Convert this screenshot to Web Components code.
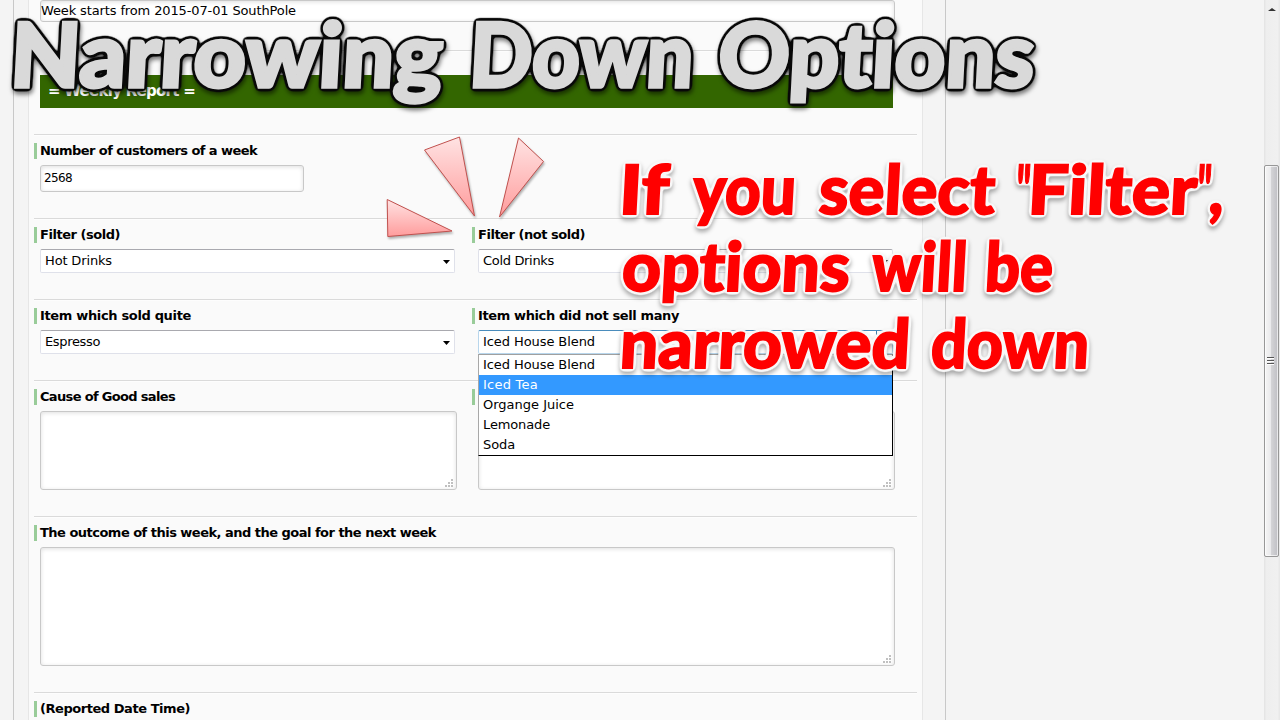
<!DOCTYPE html>
<html lang="en"><head><meta charset="utf-8"><title>Weekly Report</title>
<style>
html,body{margin:0;height:100%;overflow:hidden}
body{background:#f4f4f4;font:13px/16px "DejaVu Sans",Verdana,sans-serif;color:#000}
</style></head><body>
<report-page></report-page>
<script>
const define=(name,html,init)=>customElements.define(name,class extends HTMLElement{
  connectedCallback(){
    if(this.shadowRoot)return;
    this.attachShadow({mode:'open'}).innerHTML=html;
    if(init)init.call(this,this.shadowRoot);
  }
});

// Text whose tracking is adjusted so that it takes the width in "w".
define('fit-text',`<style>:host{display:inline-block;white-space:nowrap}span{display:inline-block}</style><span></span>`,function(r){
  const s=r.querySelector('span');
  s.textContent=this.getAttribute('text');
  const w=+this.getAttribute('w'),now=s.getBoundingClientRect().width;
  if(w&&now)s.style.letterSpacing=((w-now)/s.textContent.length)+'px';
});

define('form-row',`<style>
:host{display:grid;grid-template-columns:438px 1fr;box-sizing:border-box;border-top:1px solid #dadada;padding-top:8px;flex:none;box-shadow:inset 0 1px #fdfdfd}
:host([wide]){grid-template-columns:1fr}
</style><slot></slot>`);

define('form-field',`<style>
:host{display:flex;flex-direction:column;gap:6px}
.label{height:16px;border-left:3px solid #99cc99;padding-left:3px;font-weight:bold;line-height:15px}
.control{padding-left:6px;display:flex}
</style><div class="label"></div><div class="control"><slot></slot></div>`,function(r){
  if(this.hasAttribute('label'))r.querySelector('.label').innerHTML=`<fit-text w="${this.getAttribute('w')}" text="${this.getAttribute('label')}"></fit-text>`;
});

define('text-box',`<style>
:host{display:flex;box-sizing:border-box;width:var(--w);height:var(--h);border:1px solid #c8c8c8;border-radius:3px;background:#fff;box-shadow:inset 0 1px 4px rgba(0,0,0,.13);padding:4px 3px;align-items:flex-start}
slot{display:block;flex:1}
svg{display:none;align-self:flex-end;margin:0 0 -2px}
:host([resizable]) svg{display:block}
</style><slot></slot><svg width="8" height="8" fill="#c0c0c0"><path d="M6 0h2v2h-2zM3 3h2v2h-2zM6 3h2v2h-2zM0 6h2v2h-2zM3 6h2v2h-2zM6 6h2v2h-2z"/></svg>`);

define('select-box',`<style>
:host{display:flex;position:relative;box-sizing:border-box;width:415px;height:24px;border:1px solid #dfe1ea;border-top-color:#a9a9af;border-radius:2px;background:#fff;padding:3px 4px;justify-content:space-between}
:host([open]){border-color:#b8d6ec;border-top-color:#4a8cbc}
svg{margin:7px 0 0}
.button{display:none;position:absolute;right:0;top:0;width:15px;height:22px;border-left:1px solid #3c7fb1}
:host([open]) .button{display:block}
:host([open]) svg{visibility:hidden}
</style><slot></slot><svg width="7" height="4"><path d="M0 0h7L3.5 4z"/></svg><i class="button"></i><slot name="list"></slot>`);

define('option-list',`<style>
:host{position:absolute;left:-1px;top:23px;width:415px;height:102px;box-sizing:border-box;background:#fff;border:1px solid #000;border-top-color:#a0a0a0;border-left-color:#a8a8a8;display:flex;flex-direction:column;z-index:2}
div{height:20px;line-height:20px;padding-left:4px}
.on{background:#3399ff;color:#fff}
</style>
<div><fit-text w="112" text="Iced House Blend"></fit-text></div>
<div class="on"><fit-text w="55" text="Iced Tea"></fit-text></div>
<div><fit-text w="91" text="Organge Juice"></fit-text></div>
<div><fit-text w="67" text="Lemonade"></fit-text></div>
<div><fit-text w="32" text="Soda"></fit-text></div>`);

define('scroll-bar',`<style>
:host{display:flex;flex-direction:column;align-items:center;box-sizing:border-box;width:16px;height:720px;background:linear-gradient(90deg,#e3e3e3,#eee 15%,#f0f0f0 85%,#e6e6e6)}
.up{margin:8px 0 154px}
.thumb{box-sizing:border-box;width:15px;height:392px;align-self:flex-start;border:1px solid #979797;border-radius:2px;box-shadow:inset 0 0 0 1px rgba(255,255,255,.65);background:linear-gradient(90deg,#f5f5f5 0,#e9e9eb 47%,#d3d3d6 50%,#bfbfc4 100%);display:flex;align-items:center;justify-content:center;padding-right:2px}
</style>
<svg class="up" width="8" height="3"><path d="M0 3L4 0L8 3z" fill="#333"/></svg>
<div class="thumb"><svg width="7" height="8"><path d="M0 .5h7M0 3.5h7M0 6.5h7" stroke="#555"/><path d="M0 1.5h7M0 4.5h7M0 7.5h7" stroke="#fff"/></svg></div>`);

// Caption lettering and the three highlight wedges float above the form.
define('caption-layer',`<style>
:host{position:absolute;inset:0;z-index:5;pointer-events:none}
svg{display:block}
text{font-family:Lato,sans-serif;font-weight:900;stroke-linejoin:miter;font-variant-ligatures:none;font-feature-settings:"liga" 0}
.title{font-size:89px;fill:#d9d9d9;stroke:#d9d9d9;stroke-width:3.500px;filter:url(#dark) drop-shadow(1px 3px 2px rgba(0,0,0,.5))}
.note{font-size:68px;fill:#f00;stroke:#f00;stroke-width:1.800px;filter:url(#light) drop-shadow(0 3px 2px rgba(0,0,0,.32))}
.wedge{fill:url(#pink);stroke:#c0504d;stroke-width:1;filter:drop-shadow(1px 2px 1px rgba(0,0,0,.3))}
</style><svg width="1280" height="720"><defs><linearGradient id="pink" x1="0" y1="0" x2="0" y2="1"><stop stop-color="#ffe3e3"/><stop offset="1" stop-color="#ff9c9c"/></linearGradient>
<filter id="dark" filterUnits="userSpaceOnUse" x="0" y="0" width="1280" height="720" color-interpolation-filters="sRGB"><feGaussianBlur in="SourceAlpha" stdDeviation="2"/><feComponentTransfer result="o"><feFuncA type="linear" slope="9" intercept="-.5"/></feComponentTransfer><feFlood flood-color="#080808"/><feComposite in2="o" operator="in" result="c"/><feMerge><feMergeNode in="c"/><feMergeNode in="SourceGraphic"/></feMerge></filter>
<filter id="light" filterUnits="userSpaceOnUse" x="0" y="0" width="1280" height="720" color-interpolation-filters="sRGB"><feGaussianBlur in="SourceAlpha" stdDeviation="2"/><feComponentTransfer result="o"><feFuncA type="linear" slope="9" intercept="-.5"/></feComponentTransfer><feFlood flood-color="#f8f8f8"/><feComposite in2="o" operator="in" result="c"/><feMerge><feMergeNode in="c"/><feMergeNode in="SourceGraphic"/></feMerge></filter></defs>
<g class="wedge"><path d="M424.500 150L459.500 137L474.500 216z"/><path d="M518.500 138L543.500 161.500L499.500 217z"/><path d="M387.200 199.500L452 231L387.800 236.500z"/></g>
<g class="title"></g><g class="note"></g></svg>`,function(r){
  const ns='http://www.w3.org/2000/svg';
  // Each entry: baseline y, then runs of [text, left, right] set as one text element.
  const put=(sel,words)=>{
    const g=r.querySelector(sel);
    for(const [y,...runs] of words){
      const e=document.createElementNS(ns,'text'),x0=runs[0][1];
      e.setAttribute('transform',`translate(${x0} ${y}) skewX(-3)`);
      for(const [t,x,end] of runs){
        const s=document.createElementNS(ns,'tspan');
        s.textContent=t;
        s.setAttribute('x',x-x0);
        s.setAttribute('textLength',end-x);
        s.setAttribute('lengthAdjust','spacingAndGlyphs');
        e.append(s);
      }
      g.append(e);
    }
  };
  put('.title',[[87,['Narrowing',9,441]],[87,['Down',468,692]],[87,['Options',717,1033]]]);
  put('.note',[[213.5,['If',618,668]],[213.5,['you',692,795]],[213.5,['select',818,994]],
    [213.5,['"',1015,1029],['Filter',1027,1196],['"',1196,1210],[',',1208,1223]],
    [290.5,['options',621,849]],[290.5,['will',871,966]],[290.5,['be',984,1052]],
    [367.5,['narrowed',619,909]],[367.5,['down',930,1088]]]);
});

define('report-page',`<style>
:host{display:flex;justify-content:space-between;position:relative;width:1280px;height:720px;overflow:hidden}
.outer{box-sizing:border-box;margin-left:13px;width:933px;border:solid #c8c8c8;border-width:0 1px;padding-left:14px;background:#f4f4f4}
.sheet{box-sizing:border-box;width:895px;height:720px;overflow:hidden;background:#fafafa;border:solid #e6e6e6;border-width:0 1px;padding:0 5px;display:flex;flex-direction:column}
.top{height:50px;flex:none;padding-left:6px}
.top text-box{padding:2px 0}
.bar{width:853px;height:33px;box-sizing:border-box;margin:16px 0 0 6px;background:#336600;color:#fff;font-size:15px;font-weight:bold;line-height:32px;padding-left:8px}
</style>
<div class="outer"><div class="sheet">
<div class="top"><text-box style="--w:855px;--h:22px"><fit-text w="255" text="Week starts from 2015-07-01 SouthPole"></fit-text></text-box></div>
<form-row wide style="height:84px"><div class="bar"><fit-text w="147" text="= Weekly Report ="></fit-text></div></form-row>
<form-row wide style="height:84px"><form-field label="Number of customers of a week" w="217"><text-box style="--w:264px;--h:27px"><fit-text w="28" text="2568" style="font-size:12px"></fit-text></text-box></form-field></form-row>
<form-row style="height:81px"><form-field label="Filter (sold)" w="80"><select-box><fit-text w="67" text="Hot Drinks"></fit-text></select-box></form-field><form-field label="Filter (not sold)" w="107"><select-box><fit-text w="71" text="Cold Drinks"></fit-text></select-box></form-field></form-row>
<form-row style="height:81px"><form-field label="Item which sold quite" w="151"><select-box><fit-text w="55" text="Espresso"></fit-text></select-box></form-field><form-field label="Item which did not sell many" w="201"><select-box open><fit-text w="112" text="Iced House Blend"></fit-text><option-list slot="list"></option-list></select-box></form-field></form-row>
<form-row style="height:136px"><form-field label="Cause of Good sales" w="135"><text-box resizable style="--w:417px;--h:79px"></text-box></form-field><form-field><text-box resizable style="--w:417px;--h:79px"></text-box></form-field></form-row>
<form-row wide style="height:176px"><form-field label="The outcome of this week, and the goal for the next week" w="396"><text-box resizable style="--w:855px;--h:119px"></text-box></form-field></form-row>
<form-row wide><form-field label="(Reported Date Time)" w="150"></form-field></form-row>
</div></div>
<scroll-bar></scroll-bar>
<caption-layer></caption-layer>`);
</script></body></html>
